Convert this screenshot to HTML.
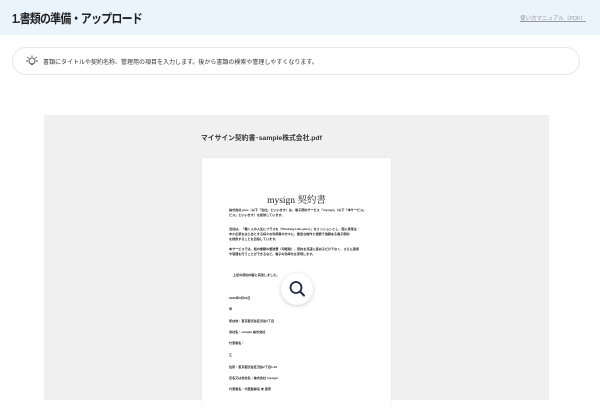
<!DOCTYPE html><html><head><meta charset="utf-8"><style>
*{margin:0;padding:0;box-sizing:border-box}
body{width:600px;height:400px;overflow:hidden;background:#fff;font-family:"Liberation Sans","Noto Sans CJK JP",sans-serif;position:relative;color:#333}
.hdr{position:absolute;left:0;top:0;width:600px;height:35px;background:#eaf4fd}
.ttl{position:absolute;left:12px;top:9px;font-size:11px;font-weight:bold;color:#222;letter-spacing:-0.8px;transform:scaleY(1.15);transform-origin:left top}
.lnk{position:absolute;left:520px;top:14px;font-size:5.5px;color:#999;text-decoration:underline}
.info{position:absolute;left:12px;top:47px;width:568px;height:28px;border:1px solid #e6e6e6;border-radius:14px;background:#fff}
.info span{position:absolute;left:30px;top:9px;font-size:6px;color:#333}
.gray{position:absolute;left:44px;top:115px;width:505px;height:285px;background:#f0f0f0}
.fn{position:absolute;left:201px;top:132px;font-size:6.8px;color:#333;font-weight:bold}
.paper{position:absolute;left:202px;top:158px;width:189px;height:250px;background:#fff;box-shadow:0 0 2px rgba(0,0,0,.08)}
.pt{position:absolute;left:0;width:189px;top:34px;text-align:center;font-family:"Liberation Serif","Noto Serif CJK SC",serif;font-size:9.5px;color:#222}
.l{position:absolute;left:27px;font-size:3.1px;color:#222;font-weight:bold;white-space:nowrap}
.mag{position:absolute;left:281px;top:273px;width:32px;height:32px;border-radius:50%;background:#fff;box-shadow:0 1px 4px rgba(0,0,0,.2)}
</style></head><body>
<div class="hdr"><div class="ttl">1.書類の準備・アップロード</div><div class="lnk">使い方マニュアル（PDF）</div></div>
<div class="info"><svg style="position:absolute;left:12px;top:7px" width="14" height="13" viewBox="0 0 14 13"><circle cx="7" cy="6" r="3" fill="none" stroke="#555" stroke-width="1"/><path d="M6 9.5h2M1 6h2M11 6h2M2.5 2l1.3 1.3M11.5 2l-1.3 1.3M7 0.5v1.5" stroke="#555" stroke-width="0.9"/></svg><span>書類にタイトルや契約名称、管理用の項目を入力します。後から書類の検索や管理しやすくなります。</span></div>
<div class="gray"></div>
<div class="fn">マイサイン契約書･sample株式会社.pdf</div>
<div class="paper">
<div class="pt">mysign 契約書</div>
<div class="l" style="top:49px">株式会社 plus（以下「当社」といいます）は、電子契約サービス「mysign」（以下「本サービス」</div>
<div class="l" style="top:54px">ビス」といいます）を提供しています。</div>
<div class="l" style="top:68px">当社は、「働く人の人生にプラスを（Thinking Life+plus）」をミッションとし、個人事業主・</div>
<div class="l" style="top:73px">中小企業をはじめとする様々な利用者の方々に、簡単な操作と低額で信頼ある電子契約</div>
<div class="l" style="top:78px">を提供することを目指しています。</div>
<div class="l" style="top:88px">本サービスでは、紙の書類の郵送費（印紙税）、契約を迅速に進めるだけでなく、さらに就業</div>
<div class="l" style="top:93px">や管理を行うことができるなど、電子の効率化を実現します。</div>
<div class="l" style="top:114px;left:31px">上記の契約内容に同意しました。</div>
<div class="l" style="top:137px">2020年8月16日</div>
<div class="l" style="top:148px">甲</div>
<div class="l" style="top:160px">所在地：東京都渋谷区渋谷2丁目</div>
<div class="l" style="top:171px">会社名：sample 株式会社</div>
<div class="l" style="top:182px">代表者名：</div>
<div class="l" style="top:194px">乙</div>
<div class="l" style="top:206px">住所：東京都渋谷区渋谷2丁目1-10</div>
<div class="l" style="top:217px">氏名又は会社名：株式会社 mysign</div>
<div class="l" style="top:228px">代表者名：代表取締役 未 里奈</div>
</div>
<div class="mag"><svg width="32" height="32" viewBox="0 0 32 32"><circle cx="15" cy="14.5" r="5.5" fill="none" stroke="#1f2a44" stroke-width="1.8"/><path d="M19 18.5l4 4" stroke="#1f2a44" stroke-width="2" stroke-linecap="round"/></svg></div>
</body></html>
